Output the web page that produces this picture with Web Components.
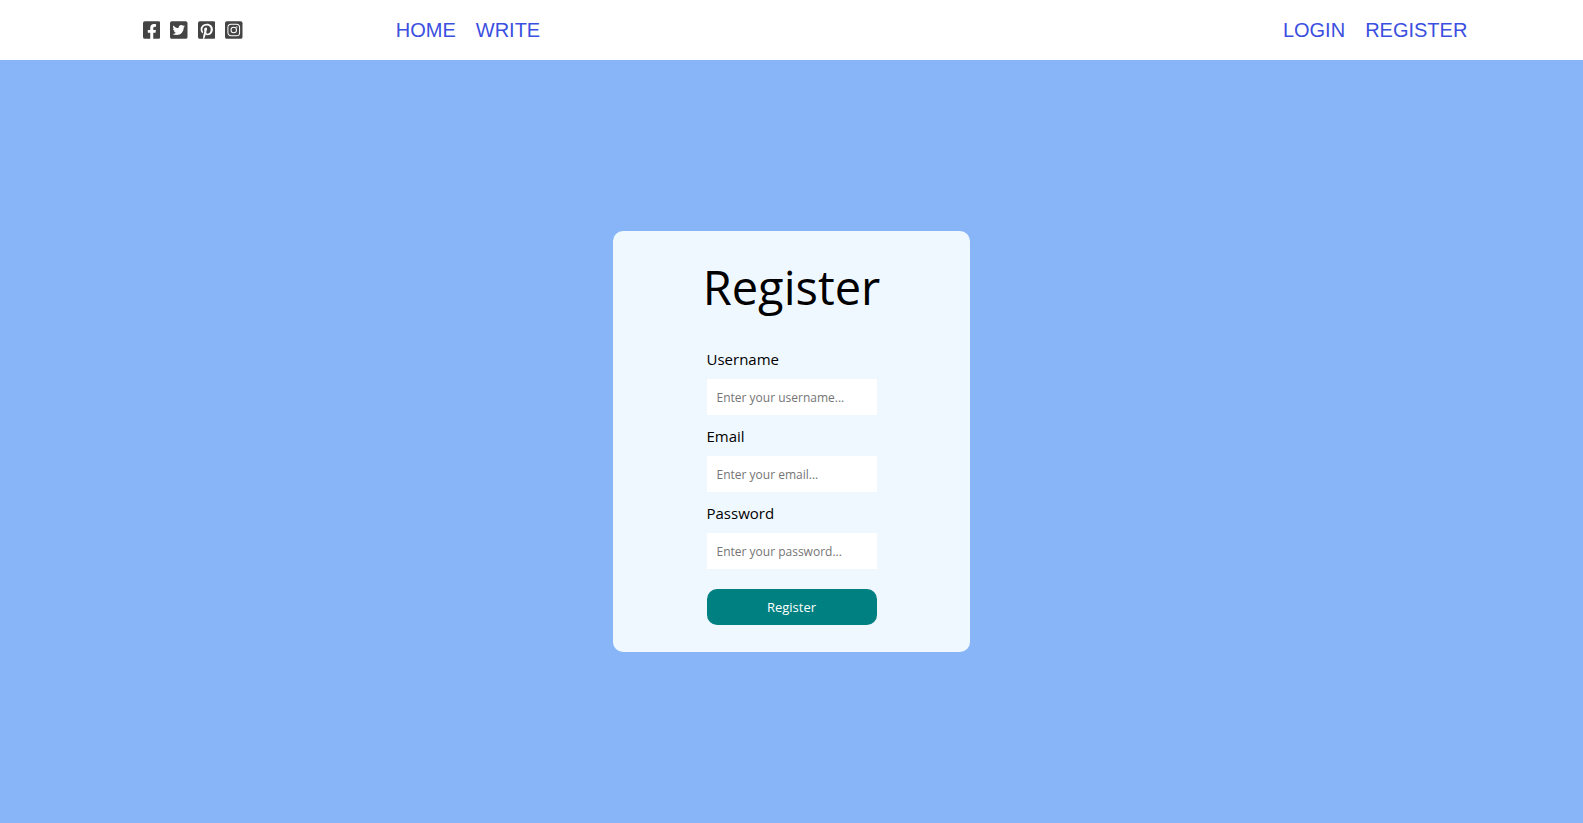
<!DOCTYPE html>
<html lang="en">
<head>
<meta charset="utf-8">
<meta name="viewport" content="width=device-width, initial-scale=1">
<title>Register</title>
<style>
  body { margin: 0; font-family: "Open Sans", "Noto Sans", sans-serif; }
</style>
</head>
<body>
<blog-app></blog-app>

<template id="app-template">
  <style>
    :host { display: flex; flex-direction: column; min-height: 100vh; background: #87b5f7; }
    main { flex: 1; display: flex; align-items: center; justify-content: center; }
  </style>
  <top-bar>
    <social-link slot="social" name="facebook"></social-link>
    <social-link slot="social" name="twitter"></social-link>
    <social-link slot="social" name="pinterest"></social-link>
    <social-link slot="social" name="instagram"></social-link>
    <nav-link slot="pages">HOME</nav-link>
    <nav-link slot="pages">WRITE</nav-link>
    <nav-link slot="account">LOGIN</nav-link>
    <nav-link slot="account">REGISTER</nav-link>
  </top-bar>
  <main><register-card></register-card></main>
</template>

<template id="bar-template">
  <style>
    :host { display: block; background: #fff; }
    nav { display: grid; grid-template-columns: 3fr 6fr 3fr; align-items: center; height: 60px; }
    div { display: flex; align-items: center; }
    .social { justify-content: center; gap: 10px; padding-right: 10px; }
    .pages { gap: 20px; }
    .account { justify-content: center; gap: 20px; padding-right: 20px; }
  </style>
  <nav>
    <div class="social"><slot name="social"></slot></div>
    <div class="pages"><slot name="pages"></slot></div>
    <div class="account"><slot name="account"></slot></div>
  </nav>
</template>

<template id="link-template">
  <style>
    :host { display: block; }
    a { display: block; color: #3b4fe0; text-decoration: none; font: 20px/24px "Liberation Sans", Arial, sans-serif; }
  </style>
  <a href="#"><slot></slot></a>
</template>

<template id="field-template">
  <style>
    :host { display: block; }
    label { display: block; padding: 10px 0 9px; font-size: 15px; line-height: 22px; }
    input { display: block; box-sizing: border-box; width: 100%; height: 36px; padding: 10px; border: 0; background: #fff; color: #000; font: 12px/16px "Open Sans", "Noto Sans", sans-serif; }
    input::placeholder { color: #757575; }
  </style>
  <label for="control"><slot></slot></label>
  <input id="control">
</template>

<template id="card-template">
  <style>
    :host { display: flex; flex-direction: column; align-items: center; box-sizing: border-box; width: 100%; max-width: 357px; padding: 20px 20px 27px; border-radius: 10px; background: #f0f8ff; color: #000; }
    h1 { margin: 0; font-size: 47px; line-height: 72px; font-weight: 400; }
    form { width: 170px; margin-top: 15px; }
    button { display: block; width: 100%; height: 36px; margin-top: 20px; padding: 0; border: 0; border-radius: 10px; background: #008080; color: #fff; font: 13px/16px "Open Sans", "Noto Sans", sans-serif; cursor: pointer; }
  </style>
  <h1>Register</h1>
  <form>
    <form-field type="text" placeholder="Enter your username...">Username</form-field>
    <form-field type="email" placeholder="Enter your email...">Email</form-field>
    <form-field type="password" placeholder="Enter your password...">Password</form-field>
    <button type="submit">Register</button>
  </form>
</template>

<script>
  const attach = (el, id) => {
    const root = el.attachShadow({ mode: "open" });
    root.append(document.getElementById(id).content.cloneNode(true));
    return root;
  };

  const icons = {
    facebook: '<path d="M400 32H48A48 48 0 0 0 0 80v352a48 48 0 0 0 48 48h137.25V327.69h-63V256h63v-54.64c0-62.15 37-96.48 93.67-96.48 27.14 0 55.52 4.84 55.52 4.84v61h-31.27c-30.81 0-40.42 19.12-40.42 38.73V256h68.78l-11 71.69h-57.78V480H400a48 48 0 0 0 48-48V80a48 48 0 0 0-48-48z"/>',
    twitter: '<path d="M400 32H48C21.5 32 0 53.5 0 80v352c0 26.5 21.5 48 48 48h352c26.5 0 48-21.5 48-48V80c0-26.5-21.5-48-48-48zm-48.9 158.8c.2 2.8.2 5.7.2 8.5 0 86.7-66 186.6-186.6 186.6-37.2 0-71.7-10.8-100.7-29.4 5.3.6 10.4.8 15.8.8 30.7 0 58.9-10.4 81.4-28-28.8-.6-53-19.5-61.3-45.5 10.1 1.5 19.2 1.5 29.6-1.2-30-6.1-52.5-32.5-52.5-64.4v-.8c8.7 4.9 18.9 7.9 29.6 8.3a65.447 65.447 0 0 1-29.2-54.6c0-12.2 3.2-23.4 8.9-33.1 32.3 39.8 80.8 65.8 135.2 68.6-9.3-44.5 24-80.6 64-80.6 18.9 0 35.9 7.9 47.9 20.7 14.8-2.8 29-8.3 41.6-15.8-4.9 15.2-15.2 28-28.8 36.1 13.2-1.4 26-5.1 37.8-10.2-8.9 13.1-20.1 24.7-32.9 34z"/>',
    pinterest: '<path d="M448 80v352c0 26.5-21.5 48-48 48H154.4c9.8-16.4 22.4-40 27.4-59.3 3-11.5 15.3-58.4 15.3-58.4 8 15.3 31.4 28.2 56.3 28.2 74.1 0 127.4-68.1 127.4-152.7 0-81.1-66.2-141.8-151.4-141.8-106 0-162.2 71.1-162.2 148.6 0 36 19.2 80.8 49.8 95.1 4.7 2.2 7.1 1.2 8.2-3.3.8-3.4 5-20.1 6.8-27.8.6-2.5.3-4.6-1.7-7-10.1-12.3-18.3-34.9-18.3-56 0-54.2 41-106.6 110.9-106.6 60.3 0 102.6 41.1 102.6 99.9 0 66.4-33.5 112.4-77.2 112.4-24.1 0-42.1-19.9-36.4-44.4 6.9-29.2 20.3-60.7 20.3-81.8 0-53-75.5-45.7-75.5 25 0 21.7 7.3 36.5 7.3 36.5-31.4 132.8-36.1 134.5-29.6 192.6l2.2.8H48c-26.5 0-48-21.5-48-48V80c0-26.5 21.5-48 48-48h352c26.5 0 48 21.5 48 48z"/>',
    instagram: '<rect y="32" width="448" height="448" rx="48"/><g fill="none" stroke="#fff" stroke-width="26"><rect x="75" y="107" width="298" height="298" rx="78"/><circle cx="224" cy="256" r="70"/></g><circle cx="304" cy="176" r="18" fill="#fff"/>'
  };

  customElements.define("social-link", class extends HTMLElement {
    constructor() {
      super();
      this.attachShadow({ mode: "open" });
    }
    connectedCallback() {
      const name = this.getAttribute("name");
      this.shadowRoot.innerHTML = `<style>
        :host { display: block; }
        a { display: block; color: #444; }
        svg { display: block; height: 20px; width: auto; fill: currentColor; }
      </style><a href="#" aria-label="${name}"><svg viewBox="0 0 448 512" aria-hidden="true">${icons[name]}</svg></a>`;
    }
  });

  customElements.define("nav-link", class extends HTMLElement {
    constructor() { super(); attach(this, "link-template"); }
  });

  customElements.define("top-bar", class extends HTMLElement {
    constructor() { super(); attach(this, "bar-template"); }
  });

  customElements.define("form-field", class extends HTMLElement {
    constructor() { super(); attach(this, "field-template"); }
    connectedCallback() {
      const input = this.shadowRoot.querySelector("input");
      input.type = this.getAttribute("type");
      input.placeholder = this.getAttribute("placeholder");
    }
  });

  customElements.define("register-card", class extends HTMLElement {
    constructor() { super(); attach(this, "card-template"); }
  });

  customElements.define("blog-app", class extends HTMLElement {
    constructor() { super(); attach(this, "app-template"); }
  });
</script>
</body>
</html>
